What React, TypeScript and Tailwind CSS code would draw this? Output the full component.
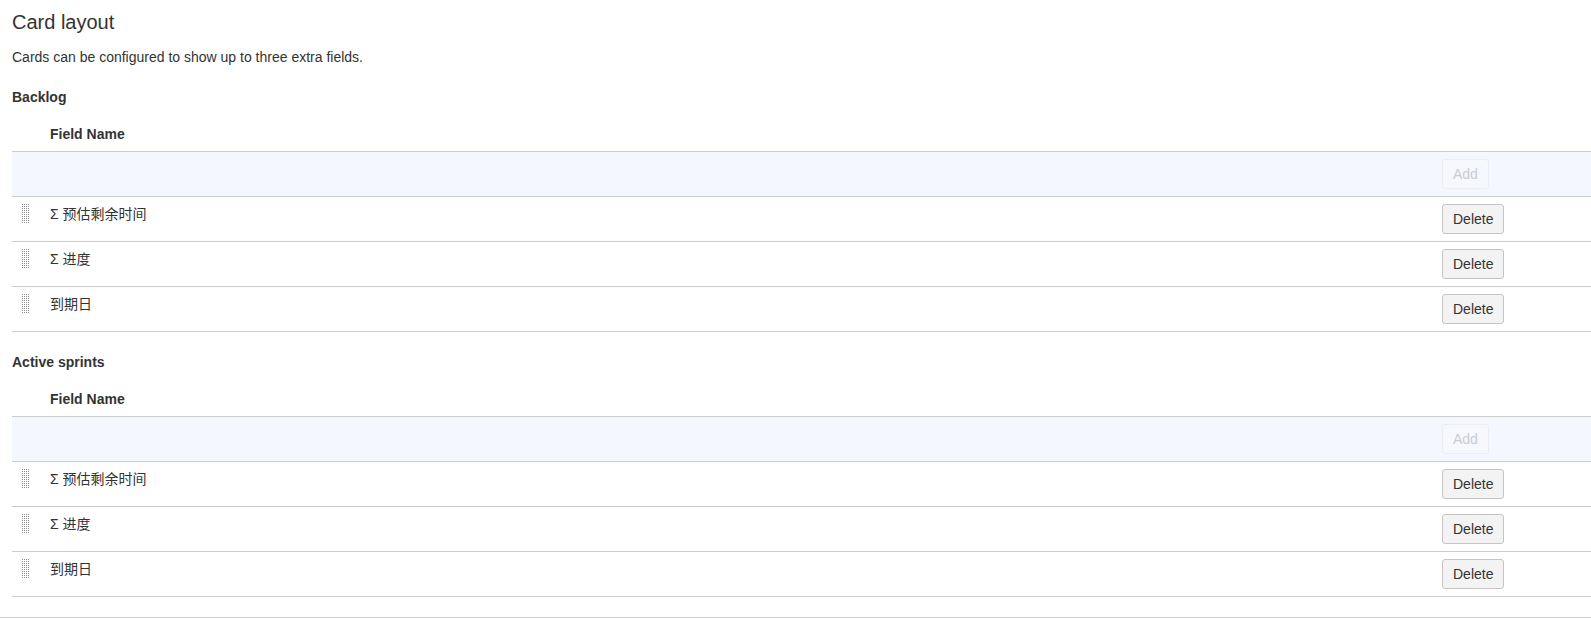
import React from "react";

function Handle() {
  const dots: React.ReactNode[] = [];
  for (let r = 0; r < 10; r++) {
    for (let c = 0; c < 4; c++) {
      dots.push(<rect key={`${r}-${c}`} x={c * 2} y={r * 2} width={1} height={1} fill="#8c8c8c" />);
    }
  }
  return (
    <svg width="8" height="20" viewBox="0 0 8 20" className="block">
      {dots}
    </svg>
  );
}

const fields = ["Σ 预估剩余时间", "Σ 进度", "到期日"];

function Table() {
  return (
    <div className="flex flex-col">
      <div className="flex border-b border-[#cccccc] pt-[17px] pb-[7px]">
        <div className="w-[28px]" />
        <div className="pl-[10px] leading-[20px] font-bold text-[14px] text-[#333]">Field Name</div>
      </div>
      <div className="flex h-[45px] border-b border-[#cccccc] bg-[#f4f7fd]">
        <div className="flex-1" />
        <div className="w-[149px] pt-[7px]">
          <button
            disabled
            className="h-[30px] px-[10px] rounded-[3px] border border-[#ebedf0] bg-[#f6f8fd] text-[14px] text-[#c8ccd2] leading-[20px]"
          >
            Add
          </button>
        </div>
      </div>
      {fields.map((f) => (
        <div key={f} className="flex h-[45px] border-b border-[#cccccc]">
          <div className="w-[28px] pl-[10px] pt-[7px]">
            <Handle />
          </div>
          <div className="flex-1 pl-[10px] pt-[7px] leading-[20px] text-[14px] text-[#333]">{f}</div>
          <div className="w-[149px] pt-[7px]">
            <button className="h-[30px] px-[10px] rounded-[3px] border border-[#c4c4c4] bg-[#f3f3f3] text-[14px] text-[#333] leading-[20px]">
              Delete
            </button>
          </div>
        </div>
      ))}
    </div>
  );
}

export default function App() {
  return (
    <div
      className="w-full min-h-[618px] bg-white border-b border-[#cccccc] pb-[20px]"
      style={{ fontFamily: '"Liberation Sans", Arial, "Noto Sans CJK SC", sans-serif' }}
    >
      <div className="pl-[12px] pt-[10px]">
        <h2 className="text-[20px] leading-[24px] text-[#333] font-normal">Card layout</h2>
        <p className="mt-[13px] text-[14px] leading-[20px] text-[#333]">
          Cards can be configured to show up to three extra fields.
        </p>
        <h3 className="mt-[20px] text-[14px] leading-[20px] font-bold text-[#333]">Backlog</h3>
        <Table />
        <h3 className="mt-[20px] text-[14px] leading-[20px] font-bold text-[#333]">Active sprints</h3>
        <Table />
      </div>
    </div>
  );
}
